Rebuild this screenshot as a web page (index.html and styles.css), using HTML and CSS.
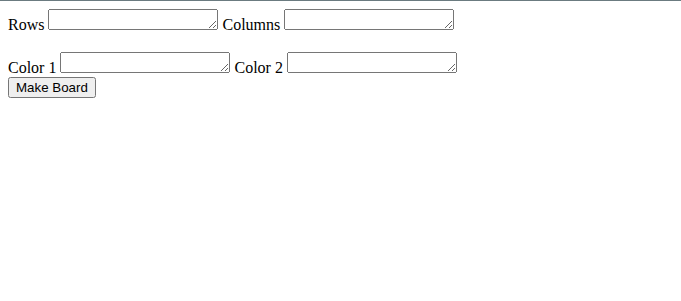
FILE: index.html
```html
<!DOCTYPE html>
<html lang="en">
<head>
  <meta charset="UTF-8">
  <title>Checkerboard</title>
  <link rel="stylesheet" href="styles.css">
</head>
<body>
  <label for="rows">Rows</label>
  <textarea id="rows" class="field" rows="1"></textarea>
  <label for="columns">Columns</label>
  <textarea id="columns" class="field" rows="1"></textarea>
  <br><br>
  <label for="color1">Color 1</label>
  <textarea id="color1" class="field" rows="1"></textarea>
  <label for="color2">Color 2</label>
  <textarea id="color2" class="field" rows="1"></textarea>
  <br>
  <button id="make" class="make-btn">Make Board</button>
</body>
</html>
```

FILE: styles.css
```css
html {
  border-top: 1px solid #6b7b80;
}

body {
  font-family: "Liberation Serif", serif;
  font-size: 16px;
  margin: 8px;
  color: #000;
}

.field {
  font-family: "Liberation Mono", monospace;
  font-size: 13.33px;
  box-sizing: border-box;
  width: 170px;
}

.make-btn {
  font-family: "Liberation Sans", Arial, sans-serif;
  font-size: 13.33px;
}
```
